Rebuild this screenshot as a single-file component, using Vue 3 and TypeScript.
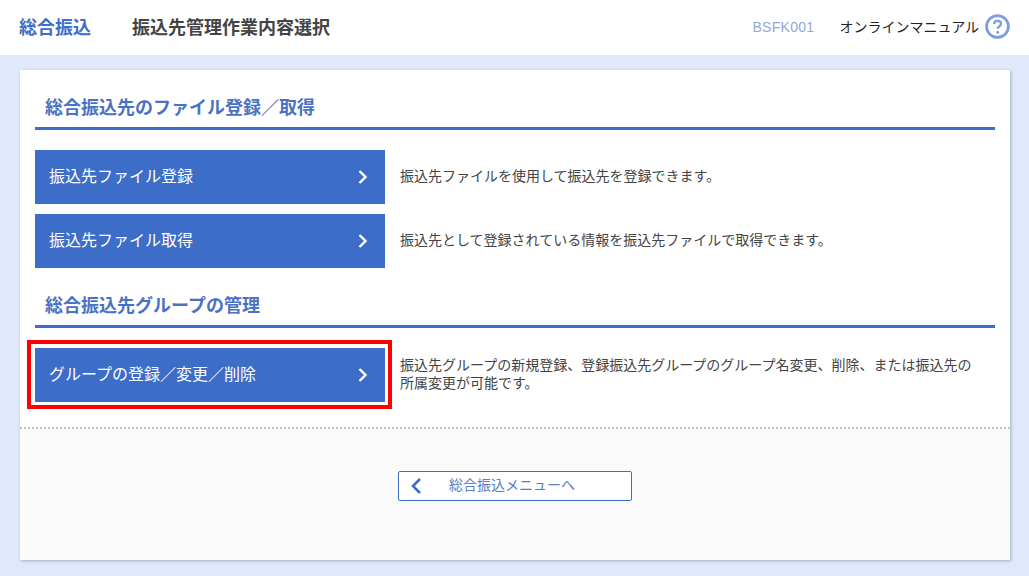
<script setup lang="ts">
interface Row { label: string; lines: string[]; highlighted?: boolean }
const fileRows: Row[] = [
  { label: '振込先ファイル登録', lines: ['振込先ファイルを使用して振込先を登録できます。'] },
  { label: '振込先ファイル取得', lines: ['振込先として登録されている情報を振込先ファイルで取得できます。'] },
]
const groupRows: Row[] = [
  { label: 'グループの登録／変更／削除', highlighted: true, lines: ['振込先グループの新規登録、登録振込先グループのグループ名変更、削除、または振込先の', '所属変更が可能です。'] },
]
</script>

<template>
  <div class="page">
    <header class="top">
      <span class="crumb">総合振込</span>
      <h1 class="title">振込先管理作業内容選択</h1>
      <span class="code">BSFK001</span>
      <span class="manual">オンラインマニュアル</span>
      <svg class="help" width="25" height="25" viewBox="0 0 25 25">
        <circle cx="12.5" cy="12.5" r="10.9" fill="#fff" stroke="#7f9fdc" stroke-width="2.8" />
        <path d="M9.1 10c0-2 1.5-3.1 3.5-3.1s3.4 1.1 3.4 2.9c0 2.7-3.4 2.7-3.4 5" fill="none" stroke="#7f9fdc" stroke-width="2.3" />
        <circle cx="12.6" cy="18.2" r="1.5" fill="#7f9fdc" />
      </svg>
    </header>
    <main class="card">
      <section class="content">
        <h2 class="heading">総合振込先のファイル登録／取得</h2>
        <div class="rows">
          <div v-for="r in fileRows" :key="r.label" class="row">
            <button class="action">
              <span>{{ r.label }}</span>
              <svg width="12" height="16" viewBox="0 0 12 16"><path d="M2.5 2l6 6-6 6" fill="none" stroke="#fff" stroke-width="2.4" /></svg>
            </button>
            <p class="desc"><span v-for="l in r.lines" :key="l">{{ l }}</span></p>
          </div>
        </div>
        <h2 class="heading">総合振込先グループの管理</h2>
        <div class="rows">
          <div v-for="r in groupRows" :key="r.label" class="row">
            <button class="action" :class="{ highlighted: r.highlighted }">
              <span>{{ r.label }}</span>
              <svg width="12" height="16" viewBox="0 0 12 16"><path d="M2.5 2l6 6-6 6" fill="none" stroke="#fff" stroke-width="2.4" /></svg>
            </button>
            <p class="desc"><span v-for="l in r.lines" :key="l">{{ l }}</span></p>
          </div>
        </div>
      </section>
      <footer class="foot">
        <button class="back">
          <svg width="12" height="16" viewBox="0 0 12 16"><path d="M9 1L2 8l7 7" fill="none" stroke="#3c6dc8" stroke-width="2.6" /></svg>
          <span>総合振込メニューへ</span>
        </button>
      </footer>
    </main>
  </div>
</template>

<style>
html, body { margin: 0; background: #dfe9fb; }
</style>

<style scoped>
.page {
  width: 1029px;
  height: 576px;
  overflow: hidden;
  background: #dfe9fb;
  font-family: "Noto Sans CJK JP", "Liberation Sans", sans-serif;
}
.top {
  height: 55px;
  background: #fff;
  display: flex;
  align-items: center;
  padding: 0 19px 2px 19px;
  box-sizing: border-box;
}
.crumb { font-size: 18px; line-height: 24px; font-weight: 700; color: #3c6dc8; width: 113px; margin-bottom: 2px; }
.title { margin: 0 0 2px; font-size: 18px; line-height: 24px; font-weight: 700; color: #444; flex: 1; }
.code { font-family: "Liberation Sans", sans-serif; font-size: 14px; letter-spacing: 0.3px; color: #8fa8da; margin-right: 25px; }
.manual { font-size: 14px; color: #222; margin: 0 6px 2px 0; }
.help { display: block; }
.card {
  width: 990px;
  height: 490px;
  margin: 15px 0 0 20px;
  background: #fafafa;
  box-shadow: 1px 1px 3px rgba(90, 100, 130, 0.45);
  display: flex;
  flex-direction: column;
}
.content {
  height: 357px;
  background: #fff;
  padding: 0 15px;
  border-bottom: 2px dotted #c4c4c4;
  box-sizing: content-box;
}
.heading {
  margin: 0;
  height: 60px;
  padding: 0 0 8px 10px;
  box-sizing: border-box;
  display: flex;
  align-items: flex-end;
  border-bottom: 3px solid #3c6dc8;
  font-size: 18px;
  line-height: 26px;
  font-weight: 700;
  color: #4a72c4;
}
.rows { display: flex; flex-direction: column; gap: 10px; padding-top: 20px; }
.row { display: flex; align-items: center; gap: 15px; }
.action {
  position: relative;
  width: 350px;
  height: 54px;
  flex: none;
  padding: 0 15px;
  border: 0;
  background: #3c6dc8;
  color: #fff;
  font: inherit;
  font-size: 16px;
  display: flex;
  align-items: center;
  justify-content: space-between;
}
.action span { margin: 0 0 4px -1px; }
.action svg { margin-right: 1px; }
.action.highlighted::after {
  content: "";
  position: absolute;
  inset: -8px -7px -7px -8px;
  border: 4px solid #f00;
}
.desc {
  margin: 0 0 4px;
  font-size: 14px;
  line-height: 18px;
  color: #444;
  display: flex;
  flex-direction: column;
}
.foot { flex: 1; display: flex; justify-content: center; padding-top: 42px; box-sizing: border-box; }
.back {
  width: 234px;
  height: 30px;
  border: 1px solid #3c6dc8;
  border-radius: 2px;
  background: #fff;
  padding: 0 0 0 12px;
  display: flex;
  align-items: center;
  gap: 26px;
  font: inherit;
  font-size: 14px;
  color: #5a7cc4;
}
.back span { margin-bottom: 4px; }
</style>
